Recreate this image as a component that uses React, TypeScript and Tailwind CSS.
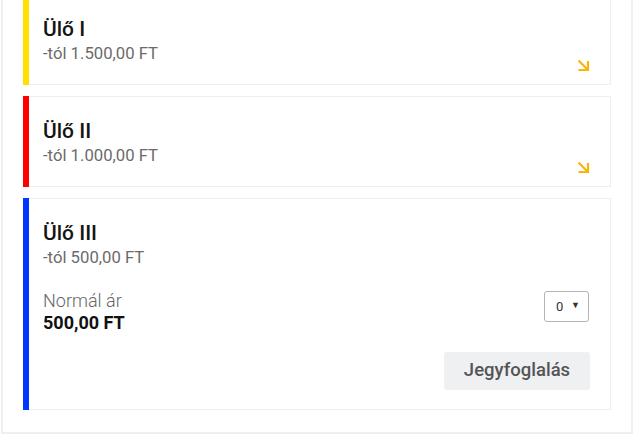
import React from 'react';

type Seat = {
  name: string;
  from: string;
  color: string;
  open?: boolean;
};

const seats: Seat[] = [
  { name: 'Ülő I', from: '-tól 1.500,00 FT', color: 'bg-[#ffe000]' },
  { name: 'Ülő II', from: '-tól 1.000,00 FT', color: 'bg-[#ff0000]' },
  { name: 'Ülő III', from: '-tól 500,00 FT', color: 'bg-[#0036ff]', open: true },
];

function ExpandArrow() {
  return (
    <svg width="13" height="13" viewBox="0 0 13 13" fill="none" className="absolute right-[20px] bottom-[12px]">
      <path d="M1.5 1.5 L10.5 10.5" stroke="#f8b60c" strokeWidth="2.2" />
      <path d="M1.5 11 H11 V2" stroke="#f8b60c" strokeWidth="2.2" />
    </svg>
  );
}

function SeatCard({ seat }: { seat: Seat }) {
  return (
    <div className="relative flex border border-[#efefef] bg-white">
      {/* colour stripe */}
      <div className={`w-[6px] shrink-0 ${seat.color} -my-px -ml-px`} />
      <div className="flex-1 pl-[14px] pr-[20px] pt-[20px] pb-[19px]">
        <div className="text-[21px] leading-[28px] font-medium text-[#151515]">{seat.name}</div>
        <div className="text-[16.7px] leading-[22px] text-[#6b6b6b]">{seat.from}</div>

        {seat.open && (
          <>
            <div className="mt-[21px] flex items-start justify-between">
              <div>
                <div className="text-[18px] leading-[22px] font-light text-[#666]">Normál ár</div>
                <div className="text-[18px] leading-[22px] font-bold text-[#111]">500,00 FT</div>
              </div>
              <div className="relative mt-[1px] mr-[1px]">
                <select className="h-[31px] w-[45px] appearance-none rounded-[3px] border border-[#b4b4b4] bg-white pl-[11px] text-[13px] text-[#333] outline-none">
                  <option>0</option>
                  <option>1</option>
                  <option>2</option>
                </select>
                <span className="pointer-events-none absolute right-[9px] top-[8px] text-[9px] text-[#333]">▼</span>
              </div>
            </div>
            <div className="mt-[18px] flex justify-end">
              <button
                type="button"
                className="h-[38px] w-[146px] rounded-[3px] bg-[#eff0f2] text-[18.5px] font-medium text-[#555]"
              >
                Jegyfoglalás
              </button>
            </div>
          </>
        )}
      </div>
      {!seat.open && <ExpandArrow />}
    </div>
  );
}

export default function App() {
  return (
    <div className="h-[444px] overflow-hidden bg-white font-['Roboto',sans-serif]">
      <div className="-mt-[28px] ml-px mr-[7px] border-2 border-[#efefef] px-[20px] pt-[20px] pb-[22px]">
        <div className="flex flex-col gap-[11px]">
          {seats.map((seat) => (
            <SeatCard key={seat.name} seat={seat} />
          ))}
        </div>
      </div>
    </div>
  );
}
